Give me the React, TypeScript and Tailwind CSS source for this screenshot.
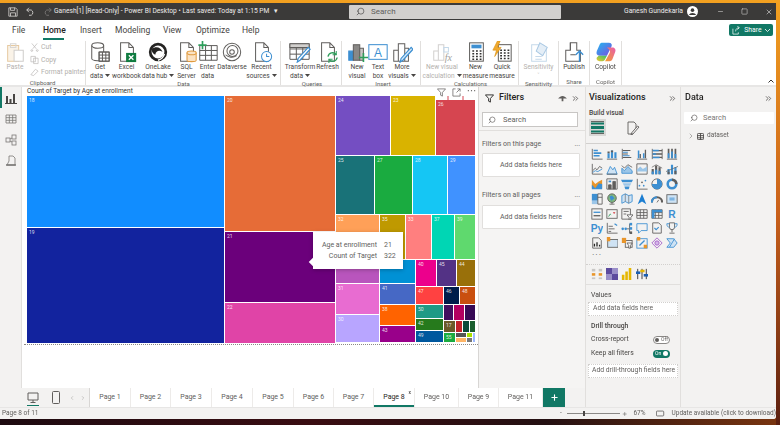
import type { ReactNode } from 'react';
import { ChevronRight, ChevronsRight, Minus, Plus, Search, Square, X } from 'lucide-react';

const GRAY = '#605e5c';
const BLUE = '#3d8fd1';
const GREEN = '#117865';

const CELLS: [string, number, number, number, number, string][] = [
    ['18', 27, 96, 224, 227, '#118dff'],
    ['19', 27, 228, 224, 343, '#12239e'],
    ['20', 225, 96, 335, 231, '#e66c37'],
    ['21', 225, 232, 335, 302, '#6b007b'],
    ['22', 225, 303, 335, 343, '#e044a7'],
    ['24', 336, 96, 390, 155, '#744ec2'],
    ['23', 391, 96, 435, 155, '#d9b300'],
    ['26', 436, 100, 475, 155, '#d64550'],
    ['25', 336, 156, 374, 214, '#197278'],
    ['27', 375, 156, 412, 214, '#1aab40'],
    ['28', 413, 156, 447, 214, '#15c6f4'],
    ['29', 448, 156, 475, 214, '#4092ff'],
    ['32', 336, 215, 379, 259, '#ffa058'],
    ['35', 380, 215, 405, 259, '#bf9900'],
    ['33', 406, 215, 431, 259, '#ff7f7f'],
    ['37', 432, 215, 454, 259, '#00d6b4'],
    ['39', 455, 215, 475, 259, '#5fd96e'],
    ['34', 336, 260, 379, 283, '#b955bd'],
    ['31', 336, 284, 379, 314, '#e86cd1'],
    ['30', 336, 315, 379, 342, '#b8a5ff'],
    ['36', 380, 260, 415, 283, '#0091d5'],
    ['41', 380, 284, 415, 304, '#4668c5'],
    ['38', 380, 305, 415, 325, '#ff6300'],
    ['43', 380, 326, 415, 342, '#99008a'],
    ['40', 416, 260, 436, 286, '#ec008c'],
    ['45', 437, 260, 456, 286, '#533285'],
    ['44', 457, 260, 475, 286, '#99700a'],
    ['47', 416, 287, 443, 304, '#ff4141'],
    ['46', 444, 287, 459, 304, '#001d4b'],
    ['48', 460, 287, 475, 304, '#c94f0f'],
    ['50', 416, 305, 443, 318, '#1f9a85'],
    ['42', 416, 319, 443, 330, '#267a1c'],
    ['49', 416, 331, 443, 342, '#00589e'],
    ['', 444, 305, 453, 320, '#42105f'],
    ['', 454, 305, 464, 320, '#b30060'],
    ['', 465, 305, 475, 320, '#380a55'],
    ['17', 444, 321, 455, 332, '#6b5a29'],
    ['', 456, 321, 462, 332, '#c4232b'],
    ['', 463, 321, 469, 332, '#0c4a3a'],
    ['', 470, 321, 475, 332, '#1a5e2e'],
    ['55', 444, 333, 455, 342, '#1aab40'],
    ['', 456, 333, 466, 337, '#555555'],
    ['', 467, 333, 472, 337, '#a8e000'],
    ['', 456, 338, 466, 342, '#ffb566'],
    ['', 467, 338, 472, 342, '#777777'],
    ['', 473, 333, 475, 342, '#9bb8ff'],
];

function Svg({ children, size = 22 }: { children: ReactNode; size?: number }) {
    return (
        <svg width={size} height={size} viewBox="0 0 24 24" fill="none" stroke={GRAY} strokeWidth="1.1">
            {children}
        </svg>
    );
}

function Grid({ x, y, w, h, c = 3, r = 3, stroke = GRAY }: { x: number; y: number; w: number; h: number; c?: number; r?: number; stroke?: string }) {
    const lines = [];
    for (let i = 0; i <= c; i++) lines.push(<path key={`c${i}`} d={`M${x + (w * i) / c} ${y}v${h}`} stroke={stroke} />);
    for (let i = 0; i <= r; i++) lines.push(<path key={`r${i}`} d={`M${x} ${y + (h * i) / r}h${w}`} stroke={stroke} />);
    return <>{lines}</>;
}

const DOC = 'M5 2h9l5 5v15H5z M14 2v5h5';

const ICONS: Record<string, ReactNode> = {
    paste: (
        <Svg>
            <path d="M4 5h12v17H4z" stroke="#e6c9a0" fill="#faf3e8" />
            <path d="M7 3h6v4H7z" stroke="#d8d6d4" />
            <path d="M11 10h10v12H11z" stroke="#cfcdcb" fill="#fff" />
        </Svg>
    ),
    getdata: (
        <Svg>
            <path d="M3 5v14c0 3 12 3 13 2V5" />
            <ellipse cx="9.5" cy="5" rx="6.5" ry="3" />
            <path d="M11 12h11v10H11z" fill="#fff" />
            <Grid x={11} y={12} w={11} h={10} />
        </Svg>
    ),
    excel: (
        <Svg>
            <path d={DOC} fill="#fff" />
            <rect x="11" y="13" width="11" height="10" fill="#107c41" stroke="none" />
            <path d="M14 15.500l5 5M19 15.500l-5 5" stroke="#fff" strokeWidth="1.400" />
        </Svg>
    ),
    onelake: (
        <Svg>
            <circle cx="12" cy="12" r="8.500" stroke="#252423" strokeWidth="3" />
            <path d="M5 9c5-4 10-2 12 3-3-2-7-2-8 3-2-1-4-3-4-6z" fill="#252423" stroke="none" />
            <path d="M12 21c3-1 6-3 7-7" stroke="#fff" strokeWidth="1.500" />
        </Svg>
    ),
    sql: (
        <Svg>
            <path d={DOC} />
            <path d="M12 13v8c0 2 10 2 10 0v-8z" fill="#fbe3c4" stroke="#e09a3e" />
            <ellipse cx="17" cy="13" rx="5" ry="2" fill="#fbe3c4" stroke="#e09a3e" />
        </Svg>
    ),
    enter: (
        <Svg>
            <Grid x={3} y={5} w={19} h={16} c={3} r={3} />
            <path d="M6 0v9M1.500 4.500h9" stroke="#2e9e5b" strokeWidth="1.800" />
        </Svg>
    ),
    dataverse: (
        <Svg>
            <circle cx="12" cy="12" r="9.500" />
            <circle cx="12.500" cy="11" r="6" />
            <circle cx="12" cy="12" r="2.500" />
            <path d="M5 15c3 3 8 4 12 1" />
        </Svg>
    ),
    recent: (
        <Svg>
            <path d={DOC} />
            <circle cx="17" cy="17" r="5.500" fill="#fff" stroke={BLUE} />
            <path d="M17 14v3h3" stroke={BLUE} />
        </Svg>
    ),
    transform: (
        <Svg>
            <Grid x={1} y={3} w={21} h={17} c={3} r={3} />
            <path d="M1 3h21v4H1z" fill="#d2d0ce" />
            <path d="M23 9L12 21l-3 2 1-4 11-12z" fill="#fff" stroke={BLUE} strokeWidth="1.300" />
        </Svg>
    ),
    refresh: (
        <Svg>
            <path d={DOC} />
            <path d="M12 17a5 5 0 0 1 9-2M22 18a5 5 0 0 1-9 2" stroke="#2e9e5b" strokeWidth="1.500" />
            <path d="M21 11v4h-4M13 24v-4h4" stroke="#2e9e5b" />
        </Svg>
    ),
    newvisual: (
        <Svg>
            <path d="M3 11h5v10H3z" fill={BLUE} stroke={BLUE} />
            <path d="M8 4h7v17H8z" fill="#8a8886" stroke={GRAY} />
            <path d="M15 8h4v13h-4z" fill="#c8c6c4" stroke={GRAY} />
            <path d="M19 13v10M14 18h10" stroke="#2e9e5b" strokeWidth="1.800" />
        </Svg>
    ),
    textbox: (
        <Svg>
            <rect x="2" y="4" width="20" height="16" stroke={BLUE} />
            <text x="12" y="17" textAnchor="middle" fontSize="13" fontFamily="Liberation Sans" fill={BLUE} stroke="none">A</text>
        </Svg>
    ),
    more: (
        <Svg>
            <path d="M3 10h5v12H3zM8 3h7v19H8zM15 8h4v14h-4z" />
            <path d="M24 9L13 21l-3 2 1-4 11-12z" fill="#d6e8f7" stroke={BLUE} strokeWidth="1.300" />
        </Svg>
    ),
    newcalc: (
        <Svg>
            <path d="M3 11h5v10H3zM8 4h6v17H8z" stroke="#d2d0ce" />
            <path d="M14 7h5v5h-5z" stroke="#c5d9ea" />
            <text x="19" y="22" textAnchor="middle" fontSize="11" fontStyle="italic" fontFamily="Liberation Serif" fill="#a19f9d" stroke="none">fx</text>
        </Svg>
    ),
    measure: (
        <Svg>
            <rect x="5" y="2" width="15" height="20" />
            <rect x="7" y="4" width="11" height="4" fill={BLUE} stroke="none" />
            <path d="M8 11h2M12 11h2M16 11h2M8 14h2M12 14h2M16 14h2M8 17h2M12 17h2M16 17h2M8 20h2M12 20h2M16 20h2" stroke="#323130" strokeWidth="1.600" />
        </Svg>
    ),
    quick: (
        <Svg>
            <rect x="8" y="4" width="14" height="18" />
            <path d="M10 10h2M14 10h2M18 10h2M10 13h2M14 13h2M18 13h2M10 16h2M14 16h2M18 16h2M10 19h2M14 19h2M18 19h2" stroke="#323130" strokeWidth="1.600" />
            <path d="M7 0L2 10h4l-2 7 7-10H7l3-7z" fill="#f0a92e" stroke="#d98a00" strokeWidth=".6" />
        </Svg>
    ),
    sensitivity: (
        <Svg>
            <path d="M4 4h12l4 4v14H4z" stroke="#c5d9ea" />
            <path d="M13 2l8 5-5 9-7-5z" fill="#e4eef7" stroke="#a9c8e3" />
            <path d="M8 17h7M8 20h7" stroke="#c5d9ea" />
        </Svg>
    ),
    publish: (
        <Svg>
            <path d="M8 2h7v8h4v12H3V10h5z" />
            <path d="M8 2v8M8 15h6" />
            <path d="M18 23V11M14 15l4-4 4 4" stroke={BLUE} strokeWidth="1.500" />
        </Svg>
    ),
    copilot: (
        <svg width="22" height="22" viewBox="0 0 24 24">
            <defs>
                <linearGradient id="cpA" x1="0" y1="0" x2="1" y2="1">
                    <stop offset="0" stopColor="#22b8f0" />
                    <stop offset="1" stopColor="#7a4de0" />
                </linearGradient>
                <linearGradient id="cpB" x1="1" y1="0" x2="0" y2="1">
                    <stop offset="0" stopColor="#e85bb0" />
                    <stop offset="1" stopColor="#f4a02c" />
                </linearGradient>
                <linearGradient id="cpC" x1="0" y1="1" x2="1" y2="0">
                    <stop offset="0" stopColor="#f2c72e" />
                    <stop offset="1" stopColor="#33c46a" />
                </linearGradient>
            </defs>
            <path d="M8 2h7c3 0 4 2 3 4l-5 10H5C2 16 1 14 2 11l3-7c.5-1.400 1.600-2 3-2z" fill="url(#cpA)" />
            <path d="M13 7h6c3 0 4 3 3 5l-3 8c-.6 1.500-1.700 2-3 2h-5l5-9c1-2 0-4-3-6z" fill="url(#cpB)" />
            <path d="M4 16h9l-2 4c-.6 1.400-1.500 2-3 2H5c-2 0-4-2-3-4z" fill="url(#cpC)" />
        </svg>
    ),
};

function Caret() {
    return (
        <svg className="inline-block ml-[2px] align-middle" width="5" height="3" viewBox="0 0 5 3">
            <path d="M0 0h5L2.500 3z" fill="#484644" />
        </svg>
    );
}

function RibbonButton({ className, icon, lines, caret, faded }: { className: string; icon: string; lines: string[]; caret?: boolean; faded?: boolean }) {
    return (
        <div className={`flex flex-col items-center shrink-0 ${className}`}>
            <div className="h-[22px] flex items-center justify-center">{ICONS[icon]}</div>
            <div className={`mt-[0px] text-center leading-[8.500px] text-[6.600px] whitespace-nowrap ${faded ? 'text-[#b3b0ad]' : 'text-[#484644]'}`}>
                {lines.map((l, i) => (
                    <div key={l}>
                        {l}
                        {caret && i === lines.length - 1 && <Caret />}
                    </div>
                ))}
            </div>
        </div>
    );
}

function RibbonGroup({ className, label, children }: { className: string; label: string; children: ReactNode }) {
    return (
        <div className={`flex flex-col h-[44px] border-r border-[#e1dfdd] shrink-0 ${className}`}>
            <div className="flex flex-1">{children}</div>
            <div className="text-center text-[6px] leading-[7px] text-[#605e5c]">{label}</div>
        </div>
    );
}

function ClipRow({ label, icon }: { label: string; icon: ReactNode }) {
    return (
        <div className="flex items-center gap-[2px] h-[12.500px] text-[6.800px] text-[#b3b0ad] whitespace-nowrap">
            <svg width="9" height="10" viewBox="0 0 10 10" fill="none" stroke="#bdbbb9" strokeWidth=".8">{icon}</svg>
            {label}
        </div>
    );
}

// small visual gallery glyphs, 14x14
const b = BLUE;
const g = GRAY;
const VIS: ReactNode[] = [
    <><path d="M1.500 1v12h12" stroke={g} /><path d="M3 3h5M3 6h9M3 9h7" stroke={b} strokeWidth="1.800" /></>,
    <><path d="M1 13h12" stroke={g} /><path d="M3 12V6M7 12V3M11 12V5" stroke={b} strokeWidth="2.500" /><path d="M3 6V4M7 5V3" stroke={g} strokeWidth="2.500" /></>,
    <><path d="M1.500 1v12" stroke={g} /><path d="M2 3h9M2 7h6M2 11h10" stroke={g} strokeWidth="1.200" /><path d="M2 5h6M2 9h8" stroke={b} strokeWidth="1.200" /></>,
    <><path d="M1 13h12" stroke={g} /><path d="M3 12V3M9 12V6" stroke={b} strokeWidth="1.800" /><path d="M5 12V7M11 12V2" stroke={g} strokeWidth="1.500" /></>,
    <><path d="M1.500 1v12M13 1v12" stroke={g} /><path d="M2 3h11M2 7h11M2 11h11" stroke={g} strokeWidth="1.600" /><path d="M2 3h7M2 7h4M2 11h8" stroke={b} strokeWidth="1.800" /></>,
    <><path d="M1 13h12" stroke={g} /><path d="M3 12V1M7 12V1M11 12V1" stroke={g} strokeWidth="2" /><path d="M3 12V6M7 12V4M11 12V7" stroke={b} strokeWidth="2" /></>,
    <><path d="M1.500 1v12h12" stroke={g} /><path d="M2 9l3-3 2 2 3-4 3 2" stroke={g} /><path d="M2 11l3-2 3 1 5-3" stroke={b} /></>,
    <><path d="M1 13l4-9 3 4 2-3 3 8z" fill="#cfe3f4" stroke={b} /><path d="M1 13h12" stroke={g} /></>,
    <><path d="M1 12V6l3 3 4-5 5 5v3z" fill="#9cc6e8" stroke={b} /><path d="M1 3l3 3 4-4 5 3" stroke={g} /></>,
    <><path d="M1 1h12v12H1z" stroke={g} /><path d="M1 8l4-4 3 3 5-3v6H1z" fill="#9cc6e8" stroke="none" /></>,
    <><path d="M2 13V7M6 13V3M10 13V5" stroke={g} strokeWidth="2.500" /><path d="M2 13v-3M6 13V8M10 13V9" stroke={b} strokeWidth="2.500" /><path d="M1 5l5-3 7 4" stroke={g} strokeWidth=".8" /></>,
    <><path d="M3 13V7M7 13V2M11 13V5" stroke={b} strokeWidth="2.500" /><path d="M3 13v-3M11 13V9" stroke={g} strokeWidth="2.500" /><path d="M0 10l14-6" stroke={g} strokeWidth=".8" /></>,
    <><path d="M1 2l4 5 4-3 4-2v10H1z" fill="#e8952a" /><path d="M1 8l4 4 4-6 4 1v6H1z" fill={b} /></>,
    <><path d="M1 13V1h12v12z" stroke={g} /><path d="M3 13V8h3v5M8 13V4h3v9" fill={g} stroke={g} /><path d="M3 4h3" stroke={b} strokeWidth="2" /></>,
    <><path d="M0 2h14l-1.500 3h-11z" fill={b} /><path d="M2 6h10l-1.500 3h-7z" fill="#9cc6e8" /><path d="M4 10h6l-1 3H5z" fill={b} /></>,
    <><path d="M1.500 1v12h12" stroke={g} /><circle cx="4" cy="9" r="1" fill={b} /><circle cx="7" cy="5" r="1" fill={g} /><circle cx="9" cy="9" r="1" fill={b} /><circle cx="11" cy="3" r="1" fill={b} /></>,
    <><circle cx="7" cy="7" r="6" stroke={g} /><path d="M7 7V1a6 6 0 0 1 0 12A6 6 0 0 1 1 7z" fill={b} stroke="none" /></>,
    <><circle cx="7" cy="7" r="5" stroke={b} strokeWidth="3" /><path d="M7 2a5 5 0 0 1 5 5" stroke={g} strokeWidth="3" /></>,
    <><path d="M1 1h7v8H1z" fill={b} /><path d="M1 9h7v4H1z" fill="#9cc6e8" /><path d="M8 1h5v12H8zM8 5h5" stroke={g} /></>,
    <><circle cx="7" cy="6" r="5" stroke={g} fill="#7fb77e" /><path d="M4 13h6M7 11v2" stroke={g} /><path d="M4 4l3-1 3 3-4 3z" fill={b} /></>,
    <><path d="M1 3l4-2 4 2 4-1v8l-4 2-4-2-4 2z" fill="#cfe3f4" stroke={b} /><path d="M5 1v9M9 3v9" stroke={g} strokeWidth=".7" /></>,
    <path d="M7 1l5 12-5-3-5 3z" fill="#1d7ed1" />,
    <><path d="M1 11a6 6 0 0 1 12 0" stroke={g} strokeWidth="2.500" /><path d="M1 11a6 6 0 0 1 6-6" stroke={b} strokeWidth="2.500" /><path d="M7 11l2-3" stroke={g} /></>,
    <><rect x="1" y="2" width="12" height="10" fill="#cfe3f4" stroke={g} /><path d="M4 6h6M4 8h6" stroke={b} /></>,
    <><rect x="1" y="1" width="12" height="12" stroke={g} /><path d="M3 5h8" stroke={b} strokeWidth="1.500" /><path d="M3 9h8" stroke={g} strokeWidth="1.500" /></>,
    <><rect x="1" y="2" width="12" height="10" stroke={g} /><path d="M3 10l2-3 1 1" stroke="#2e9e5b" /><path d="M8 5h3l-1.500 2z" fill="#d13438" /></>,
    <><path d="M1 1h10v12H1z" stroke={g} /><path d="M3 4h6M3 7h3" stroke={g} /><path d="M7 8h7l-2.500 3v3h-2v-3z" fill="#fff" stroke={g} /></>,
    <Grid x={1} y={2} w={12} h={10} c={3} r={3} />,
    <><Grid x={1} y={2} w={12} h={10} c={3} r={3} /><path d="M1 2h12v3H1zM1 2h3v10H1z" fill={b} /></>,
    <text x="7" y="12" textAnchor="middle" fontSize="12" fontWeight="700" fontFamily="Liberation Sans" fill={b} stroke="none">R</text>,
    <text x="7" y="12" textAnchor="middle" fontSize="12" fontWeight="700" fontFamily="Liberation Sans" fill={b} stroke="none">Py</text>,
    <><path d="M1.500 1v12h12" stroke={g} /><path d="M3 5h5M3 8h7M3 11h3" stroke={g} /><path d="M10 2l3 2" stroke={b} strokeWidth="1.500" /></>,
    <><circle cx="2" cy="8" r="1.500" fill={b} /><circle cx="5.500" cy="8" r="1.500" fill={b} /><path d="M7 8h3M10 2v11" stroke={g} /><rect x="10" y="1" width="3" height="3" fill={b} /><rect x="10" y="6" width="3" height="3" fill={b} /><rect x="10" y="11" width="3" height="3" fill={g} /></>,
    <path d="M1 2h12v8H6l-3 3v-3H1z" stroke={b} />,
    <><path d="M2 1h7l3 3v9H2z" stroke={g} /><path d="M4 7l2 2 3-3" stroke={b} strokeWidth="1.300" /></>,
    <><path d="M4 1h6v5a3 3 0 0 1-6 0zM7 9v3M4 13h6" stroke={g} /><path d="M4 2H1c0 3 1 4 3 4M10 2h3c0 3-1 4-3 4" stroke={b} /></>,
    <><path d="M2 1h7l3 3v9H2z" stroke={g} /><path d="M4 11V8M7 11V6M10 11V9" stroke="#252423" strokeWidth="1.500" /></>,
    <><rect x="2" y="3" width="12" height="9" fill="#cfe3f4" stroke={g} /><path d="M1 0h4v5H1z" fill="#e8952a" /></>,
    <><rect x="5" y="4" width="8" height="8" stroke={g} /><path d="M1 1h5v6H1z" fill="#e8952a" /><path d="M7 7h6l-2 3v3H9v-3z" fill="#fff" stroke={g} /></>,
    <><rect x="1" y="2" width="12" height="11" stroke={b} /><path d="M4 10l6-6" stroke={b} strokeWidth="1.500" /><path d="M1 0h4v4H1zM9 9h4v4H9z" fill="#e8952a" /></>,
    <><path d="M7 1l6 6-6 6-6-6z" stroke="#a45cc9" /><circle cx="7" cy="7" r="2.500" fill="#d5b6e8" stroke="#a45cc9" /></>,
    <><path d="M1 2h8l4 5-4 5H1l4-5z" fill="#cfe3f4" stroke={b} /><path d="M4 12l6-10" stroke={b} /></>,
];

function Toggle({ on }: { on: boolean }) {
    return on ? (
        <div className="flex items-center justify-between w-[17px] h-[8px] rounded-full bg-[#117865] px-[2px] text-[5px] leading-none text-white">
            On<span className="w-[5px] h-[5px] rounded-full bg-white" />
        </div>
    ) : (
        <div className="flex items-center justify-between w-[17px] h-[8px] rounded-full border border-[#8a8886] bg-white px-[1px] text-[5px] leading-none text-[#605e5c]">
            <span className="w-[4px] h-[4px] rounded-full bg-[#605e5c]" />Off
        </div>
    );
}

const TABS = [
    { label: 'Page 1', w: 'w-[41px]' },
    { label: 'Page 2', w: 'w-[40px]' },
    { label: 'Page 3', w: 'w-[41px]' },
    { label: 'Page 4', w: 'w-[41px]' },
    { label: 'Page 5', w: 'w-[41px]' },
    { label: 'Page 6', w: 'w-[40px]' },
    { label: 'Page 7', w: 'w-[40px]' },
    { label: 'Page 8', w: 'w-[41px]', active: true },
    { label: 'Page 10', w: 'w-[44px]' },
    { label: 'Page 9', w: 'w-[40px]' },
    { label: 'Page 11', w: 'w-[44px]' },
];

export default function App() {
    return (
        <div className="w-[780px] h-[425px] overflow-hidden bg-[linear-gradient(90deg,#1d0a10,#3a0d12_40%,#241012_70%,#7a3510)]" style={{ fontFamily: 'Roboto, "Noto Sans", sans-serif' }}>
            <div className="h-[3px] bg-[#f2a020]" />
            <div className="flex h-[422px]">
                <div className="w-[776px] h-[416px] flex flex-col rounded-br-[3px] overflow-hidden bg-[#f3f2f1] blur-[0.3px]">
                    {/* title bar */}
                    <div className="h-[17px] bg-[#3b3a39] flex items-center text-white shrink-0">
                        <div className="w-[54px] flex items-center pl-[8px] gap-[8px] shrink-0">
                            <svg width="10" height="10" viewBox="0 0 12 12" fill="none" stroke="#d2d0ce"><path d="M1 1h8l2 2v8H1zM3 1v3h5V1M3 11V7h6v4" /></svg>
                            <svg width="9" height="9" viewBox="0 0 12 12" fill="none" stroke="#d2d0ce" strokeWidth="1.200"><path d="M4 1L1 4l3 3M1 4h6a4 4 0 0 1 0 7H4" /></svg>
                            <svg width="9" height="9" viewBox="0 0 12 12" fill="none" stroke="#797775" strokeWidth="1.200"><path d="M8 1l3 3-3 3M11 4H5a4 4 0 0 0 0 7h3" /></svg>
                        </div>
                        <div className="w-[295px] shrink-0 text-[6.700px] text-[#edebe9] whitespace-nowrap">
                            Ganesh[1] [Read-Only] - Power BI Desktop • Last saved: Today at 1:15 PM <span className="ml-[3px] text-[7px]">▾</span>
                        </div>
                        <div className="w-[212px] h-[14px] bg-[#d2d0ce] rounded-[1px] flex items-center pl-[7px] gap-[6px] shrink-0 text-[8px] text-[#605e5c]">
                            <Search size={9} strokeWidth={1.500} color="#323130" className="-scale-x-100" /> Search
                        </div>
                        <div className="w-[67px] shrink-0 text-right text-[6.800px] text-[#edebe9] whitespace-nowrap ml-[55px]">Ganesh Gundekarla</div>
                        <div className="ml-[4px] w-[11px] h-[11px] rounded-full bg-white flex items-center justify-center shrink-0">
                            <svg width="9" height="9" viewBox="0 0 10 10" fill="#3b3a39"><circle cx="5" cy="3.500" r="2" /><path d="M1 9c1-3 7-3 8 0z" /></svg>
                        </div>
                        <div className="flex items-center ml-[19px] gap-[17px] text-[#d2d0ce]">
                            <Minus size={7} />
                            <Square size={7} />
                            <X size={8} />
                        </div>
                    </div>
                    {/* tabs */}
                    <div className="h-[20px] bg-white flex items-center shrink-0 pl-[12px] pr-[3px] text-[8.500px] text-[#484644]">
                        <span className="w-[31px]">File</span>
                        <span className="w-[37px] relative font-medium text-[#252423]">
                            Home
                            <span className="absolute left-0 right-[16px] -bottom-[4px] h-[2px] bg-[#117865]" />
                        </span>
                        <span className="w-[35px]">Insert</span>
                        <span className="w-[48px]">Modeling</span>
                        <span className="w-[33px]">View</span>
                        <span className="w-[46px]">Optimize</span>
                        <span>Help</span>
                        <div className="ml-auto h-[12px] w-[44px] rounded-[2px] bg-[#117865] flex items-center justify-center gap-[3px] text-[6.800px] text-white">
                            <svg width="9" height="9" viewBox="0 0 10 10" fill="none" stroke="#fff" strokeWidth=".8"><path d="M1 3v6h6V7M4 6c0-3 2-4 4-4M6 0l2 2-2 2" /></svg>
                            Share
                            <svg width="5" height="3" viewBox="0 0 5 3" fill="none" stroke="#fff" strokeWidth=".8"><path d="M0 0l2.500 2.500L5 0" /></svg>
                        </div>
                    </div>
                    {/* ribbon */}
                    <div className="h-[47px] bg-white flex items-start pt-[1px] border-b-2 border-[#e7e6e5] shrink-0 relative">
                        <RibbonGroup className="w-[86px]" label="Clipboard">
                            <RibbonButton className="w-[30px]" icon="paste" lines={['Paste']} faded />
                            <div className="pt-[0px] flex flex-col">
                                <ClipRow label="Cut" icon={<path d="M2 1l5 6M8 1L3 7M2 8a1 1 0 1 0 .1 0M8 8a1 1 0 1 0 .1 0" />} />
                                <ClipRow label="Copy" icon={<path d="M1 1h5v6H1zM4 3h5v6H4z" />} />
                                <ClipRow label="Format painter" icon={<path d="M1 8l5-6 3 2-5 5z" />} />
                            </div>
                        </RibbonGroup>
                        <RibbonGroup className="w-[195px] pl-[1px]" label="Data">
                            <RibbonButton className="w-[26px]" icon="getdata" lines={['Get', 'data']} caret />
                            <RibbonButton className="w-[27px]" icon="excel" lines={['Excel', 'workbook']} />
                            <RibbonButton className="w-[36px]" icon="onelake" lines={['OneLake', 'data hub']} caret />
                            <RibbonButton className="w-[21px]" icon="sql" lines={['SQL', 'Server']} />
                            <RibbonButton className="w-[21px]" icon="enter" lines={['Enter', 'data']} />
                            <RibbonButton className="w-[28px]" icon="dataverse" lines={['Dataverse']} />
                            <RibbonButton className="w-[31px]" icon="recent" lines={['Recent', 'sources']} caret />
                        </RibbonGroup>
                        <RibbonGroup className="w-[61px] pl-[2px]" label="Queries">
                            <RibbonButton className="w-[34px]" icon="transform" lines={['Transform', 'data']} caret />
                            <RibbonButton className="w-[21px]" icon="refresh" lines={['Refresh']} />
                        </RibbonGroup>
                        <RibbonGroup className="w-[79px] pl-[4px]" label="Insert">
                            <RibbonButton className="w-[22px]" icon="newvisual" lines={['New', 'visual']} />
                            <RibbonButton className="w-[20px]" icon="textbox" lines={['Text', 'box']} />
                            <RibbonButton className="w-[28px]" icon="more" lines={['More', 'visuals']} caret />
                        </RibbonGroup>
                        <RibbonGroup className="w-[98px] pl-[2px]" label="Calculations">
                            <RibbonButton className="w-[38px]" icon="newcalc" lines={['New visual', 'calculation']} caret faded />
                            <RibbonButton className="w-[29px]" icon="measure" lines={['New', 'measure']} />
                            <RibbonButton className="w-[24px]" icon="quick" lines={['Quick', 'measure']} />
                        </RibbonGroup>
                        <RibbonGroup className="w-[40px]" label="Sensitivity">
                            <RibbonButton className="w-[39px]" icon="sensitivity" lines={['Sensitivity', '˅']} faded />
                        </RibbonGroup>
                        <RibbonGroup className="w-[31px]" label="Share">
                            <RibbonButton className="w-[30px]" icon="publish" lines={['Publish']} />
                        </RibbonGroup>
                        <RibbonGroup className="w-[32px]" label="Copilot">
                            <RibbonButton className="w-[31px]" icon="copilot" lines={['Copilot']} />
                        </RibbonGroup>
                        <svg className="ml-auto mr-[2px] mt-[38px]" width="6" height="4" viewBox="0 0 6 4" fill="none" stroke="#323130"><path d="M.5 3.500L3 1l2.500 2.500" /></svg>
                    </div>
                    {/* main */}
                    <div className="flex flex-1 min-h-0">
                        <div className="w-[585px] flex flex-col shrink-0">
                            <div className="flex flex-1 min-h-0">
                                {/* left nav */}
                                <div className="w-[22px] bg-[#f3f2f1] flex flex-col items-center relative shrink-0 pt-[5px] gap-[9px] border-r border-[#e1dfdd]">
                                    <span className="absolute left-0 top-0 w-[2px] h-[21px] bg-[#117865]" />
                                    <svg width="12" height="12" viewBox="0 0 12 12"><path d="M1 12V4h2v8zM4.500 12V7h2v5zM8 12V2h2v10z" fill="#484644" /><path d="M0 11.500h12" stroke="#484644" /></svg>
                                    <svg width="12" height="12" viewBox="0 0 12 12" fill="none" stroke="#797775" strokeWidth=".8"><Grid x={1} y={2} w={10} h={8} c={3} r={3} stroke="#797775" /></svg>
                                    <svg width="12" height="12" viewBox="0 0 12 12" fill="none" stroke="#797775" strokeWidth=".8"><rect x="1" y="4" width="4" height="4" /><rect x="7" y="1" width="4" height="4" /><rect x="7" y="7" width="4" height="4" /><path d="M5 5l2-1M5 7l2 1" /></svg>
                                    <svg width="12" height="12" viewBox="0 0 12 12" fill="none" stroke="#797775" strokeWidth=".8"><path d="M4 1h4l2 2v7H2l2-4z" /><path d="M1 10h10" strokeWidth="1.500" /></svg>
                                </div>
                                {/* canvas */}
                                <div className="w-[456px] bg-white relative shrink-0 overflow-hidden">
                                    <div className="pl-[5px] h-[9px] text-[6.500px] leading-[8px] text-[#323130] whitespace-nowrap">Count of Target by Age at enrollment</div>
                                    <svg className="ml-[5px] block" width="449" height="247" viewBox="27 96 449 247">
                                        {CELLS.map(([label, x1, y1, x2, y2, fill], i) => (
                                            <g key={i}>
                                                <rect x={x1} y={y1} width={x2 - x1} height={y2 - y1} fill={fill} />
                                                {label && <text x={x1 + 2} y={y1 + 6} fontSize="5" fill="#fff" fillOpacity=".85">{label}</text>}
                                            </g>
                                        ))}
                                        <path d="M448 96v4M463 96v4" stroke="#d64550" />
                                    </svg>
                                    <div className="ml-[2px] mt-[1px] w-[454px] border-b border-dotted border-[#8a8886]" />
                                    {/* visual header */}
                                    <div className="absolute right-[2px] top-[1px] flex items-center gap-[6px]">
                                        <svg width="9" height="9" viewBox="0 0 10 10" fill="none" stroke="#605e5c" strokeWidth=".8"><path d="M.5 1h9L6 5v4L4 8V5z" /></svg>
                                        <svg width="9" height="9" viewBox="0 0 10 10" fill="none" stroke="#605e5c" strokeWidth=".8"><path d="M4 1H1v8h8V6M6 1h3v3M9 1L5 5" /></svg>
                                        <svg width="9" height="9" viewBox="0 0 10 10" fill="#605e5c"><circle cx="1.500" cy="3" r=".7" /><circle cx="5" cy="3" r=".7" /><circle cx="8.500" cy="3" r=".7" /></svg>
                                    </div>
                                    {/* tooltip */}
                                    <div className="absolute left-[291px] top-[145px] w-[90px] h-[37px] bg-white shadow-[0_1px_4px_rgba(0,0,0,0.25)] flex flex-col justify-center text-[7px] leading-[10.500px] text-[#605e5c]">
                                        <span className="absolute -left-[3px] top-[27px] w-[6px] h-[6px] rotate-45 bg-white" />
                                        <div className="grid grid-cols-[64px_auto] gap-x-[7px] whitespace-nowrap">
                                            <span className="text-right">Age at enrollment</span>
                                            <span>21</span>
                                            <span className="text-right">Count of Target</span>
                                            <span>322</span>
                                        </div>
                                    </div>
                                </div>
                                {/* filters */}
                                <div className="w-[107px] bg-[#f5f4f3] border-l border-[#d8d6d4] shrink-0 pl-[3px] pr-[4px] pt-[5px]">
                                    <div className="flex items-center h-[12px] text-[9px] font-medium text-[#252423]">
                                        <svg className="ml-[3px] mr-[5px]" width="9" height="9" viewBox="0 0 10 10" fill="none" stroke="#252423"><path d="M.5 1h9L6 5v4L4 8V5z" /></svg>
                                        Filters
                                        <svg className="ml-auto" width="9" height="7" viewBox="0 0 10 8" fill="#605e5c"><path d="M0 4c3-4 7-4 10 0H6v3H4V4z" /></svg>
                                        <ChevronsRight className="ml-[4px] mr-[1px]" size={9} color="#484644" />
                                    </div>
                                    <div className="mt-[8px] h-[15px] w-[96px] bg-white border border-[#c8c6c4] flex items-center pl-[5px] gap-[7px] text-[7.500px] text-[#605e5c]">
                                        <Search size={8} color="#605e5c" className="-scale-x-100" /> Search
                                    </div>
                                    <div className="-ml-[3px] -mr-[4px] mt-[3px] border-t border-[#e1dfdd]" />
                                    <div className="mt-[9px] flex justify-between items-center h-[9px] text-[7px] text-[#605e5c] pr-[1px]">Filters on this page<span className="text-[7px]">...</span></div>
                                    <div className="mt-[4px] h-[24px] w-[98px] bg-white border border-[#e1dfdd] rounded-[1px] flex items-center justify-center text-[7px] text-[#605e5c]">Add data fields here</div>
                                    <div className="mt-[14px] flex justify-between items-center h-[9px] text-[7px] text-[#605e5c] pr-[1px]">Filters on all pages<span className="text-[7px]">...</span></div>
                                    <div className="mt-[5px] h-[24px] w-[98px] bg-white border border-[#e1dfdd] rounded-[1px] flex items-center justify-center text-[7px] text-[#605e5c]">Add data fields here</div>
                                </div>
                            </div>
                            {/* page tabs */}
                            <div className="h-[19px] flex bg-[#f3f2f1] shrink-0">
                                <div className="w-[90px] pl-[27px] flex items-center shrink-0 border-r border-[#d8d6d4]">
                                    <span className="relative flex">
                                        <svg width="12" height="11" viewBox="0 0 12 11" fill="none" stroke="#605e5c"><path d="M1 1h10v7H1zM6 8v2M3.500 10.500h5" /></svg>
                                        <span className="absolute -bottom-[3px] left-0 w-[12px] h-[1px] bg-[#117865]" />
                                    </span>
                                    <svg className="ml-[13px]" width="8" height="13" viewBox="0 0 8 13" fill="none" stroke="#605e5c"><rect x=".5" y=".5" width="7" height="12" rx="1" /></svg>
                                    <ChevronRight className="ml-[9px] -scale-x-100" size={6} color="#a19f9d" />
                                    <ChevronRight className="ml-[5px]" size={6} color="#a19f9d" />
                                </div>
                                {TABS.map((t) => (
                                    <div key={t.label} className={`${t.w} relative shrink-0 bg-white border-r border-[#edebe9] flex items-center justify-center text-[7px] ${t.active ? 'text-[#252423]' : 'text-[#605e5c]'}`}>
                                        {t.label}
                                        {t.active && <span className="absolute right-[3px] top-[2px] text-[5px] leading-none">x</span>}
                                        {t.active && <span className="absolute left-0 right-0 bottom-0 h-[2px] bg-[#117865]" />}
                                    </div>
                                ))}
                                <div className="w-[22px] bg-[#117865] flex items-center justify-center shrink-0">
                                    <Plus size={9} strokeWidth={3} color="#fff" />
                                </div>
                            </div>
                        </div>
                        {/* visualizations */}
                        <div className="w-[96px] border-l border-r border-[#e1dfdd] shrink-0 flex flex-col bg-[#f3f2f1]">
                            <div className="flex items-center h-[12px] mt-[5px] pl-[3px] text-[9px] font-medium text-[#252423] whitespace-nowrap">
                                Visualizations
                                <ChevronsRight className="ml-auto mr-[3px]" size={9} color="#484644" />
                            </div>
                            <div className="mt-[4px] pl-[3px] h-[10px] text-[6.800px] font-medium text-[#484644] leading-[10px]">Build visual</div>
                            <div className="mt-[1px] pl-[3px] flex items-center h-[17px]">
                                <div className="w-[17px] h-[17px] bg-[#d8d8d6] flex items-center justify-center">
                                    <svg width="13" height="13" viewBox="0 0 13 13"><path d="M0 2.500h13M0 10.500h13" stroke={GREEN} strokeWidth="2" /><path d="M0 6.500h13" stroke={GREEN} strokeWidth="3" /><path d="M0 .5h13M0 12.500h13" stroke="#484644" strokeWidth=".8" /></svg>
                                </div>
                                <svg className="ml-[20px]" width="14" height="14" viewBox="0 0 14 14" fill="none" stroke="#605e5c" strokeWidth=".9"><path d="M2 1h6l2 2v4M2 1v12h5" /><path d="M13 6L7 13l-2 1 .5-2 6-7z" /></svg>
                            </div>
                            <div className="mt-[7px] border-t border-[#d2d0ce]" />
                            <div className="pl-[3px] pt-[3px] grid grid-cols-[repeat(6,15px)] auto-rows-[14.800px] items-center justify-items-center">
                                {VIS.map((v, i) => (
                                    <svg key={i} width="12" height="12" viewBox="0 0 14 14" fill="none" strokeWidth="1">{v}</svg>
                                ))}
                            </div>
                            <div className="pl-[6px] h-[13px] leading-[8px] text-[9px] tracking-[1px] text-[#605e5c]">···</div>
                            <div className="border-t border-dotted border-[#d2d0ce]" />
                            <div className="pl-[3px] h-[19px] grid grid-cols-[repeat(4,15px)] items-center justify-items-center">
                                <svg width="12" height="12" viewBox="0 0 14 14"><rect x="1" y="1" width="4" height="3" fill="#c8c6c4" /><rect x="9" y="1" width="4" height="3" fill="#c8c6c4" /><rect x="1" y="6" width="4" height="3" fill="#e8952a" /><rect x="9" y="6" width="4" height="3" fill="#e8952a" /><rect x="1" y="11" width="4" height="2" fill="#c8c6c4" /><rect x="9" y="11" width="4" height="2" fill="#c8c6c4" /></svg>
                                <svg width="12" height="12" viewBox="0 0 14 14"><rect width="7" height="7" fill="#5c4a9e" /><rect x="7" width="7" height="7" fill="#9a8fc9" /><rect y="7" width="7" height="7" fill="#9a8fc9" /><rect x="7" y="7" width="7" height="7" fill="#5c4a9e" /></svg>
                                <svg width="12" height="12" viewBox="0 0 14 14"><path d="M1 8h3v6H1zM5 4h3v10H5zM9 0h3v14H9z" fill="#e5b700" /></svg>
                                <svg width="12" height="12" viewBox="0 0 14 14"><path d="M2 1v12M7 1v12M12 1v12" stroke="#252423" /><rect x="0" y="4" width="5" height="3" fill="#1a5fb4" /><rect x="5" y="2" width="5" height="3" fill="#e5b700" /><rect x="9" y="7" width="5" height="3" fill="#1a5fb4" /></svg>
                            </div>
                            <div className="border-t border-[#e1dfdd]" />
                            <div className="pl-[5px] mt-[5px] h-[10px] leading-[10px] text-[6.800px] text-[#484644]">Values</div>
                            <div className="ml-[2px] mt-[2px] w-[90px] h-[14px] bg-white border border-dotted border-[#d2d0ce] flex items-center pl-[4px] text-[6.800px] text-[#605e5c]">Add data fields here</div>
                            <div className="pl-[5px] mt-[5px] h-[10px] leading-[10px] text-[6.800px] font-medium text-[#484644]">Drill through</div>
                            <div className="flex items-center justify-between pl-[5px] pr-[10px] mt-[4px] h-[10px] text-[6.800px] text-[#484644]">Cross-report<Toggle on={false} /></div>
                            <div className="flex items-center justify-between pl-[5px] pr-[10px] mt-[4px] h-[10px] text-[6.800px] text-[#484644]">Keep all filters<Toggle on /></div>
                            <div className="ml-[2px] mt-[5px] w-[90px] h-[14px] bg-white border border-dotted border-[#d2d0ce] flex items-center pl-[3px] text-[6.800px] text-[#605e5c] whitespace-nowrap">Add drill-through fields here</div>
                        </div>
                        {/* data */}
                        <div className="flex-1 bg-[#f3f2f1] flex flex-col">
                            <div className="flex items-center h-[12px] mt-[5px] pl-[4px] text-[9px] font-medium text-[#252423]">
                                Data
                                <ChevronsRight className="ml-auto mr-[3px]" size={9} color="#484644" />
                            </div>
                            <div className="mt-[8px] ml-[3px] w-[90px] h-[12px] bg-white rounded-[1px] flex items-center pl-[6px] gap-[5px] text-[7.500px] text-[#797775]">
                                <Search size={8} color="#605e5c" className="-scale-x-100" /> Search
                            </div>
                            <div className="mt-[7px] ml-[6px] flex items-center h-[10px] text-[6.500px] text-[#605e5c]">
                                <ChevronRight size={8} color="#8a8886" />
                                <svg className="ml-[2px] mr-[3px]" width="7" height="7" viewBox="0 0 8 8" fill="none" stroke="#484644"><rect x=".5" y=".5" width="7" height="7" rx="1" /><path d="M.5 3h7M.5 5.500h7M4 .5v7" /></svg>
                                dataset
                            </div>
                        </div>
                    </div>
                    {/* status bar */}
                    <div className="h-[12px] bg-[#f3f2f1] border-t border-[#e7e6e5] flex items-center shrink-0 pl-[2px] text-[6.500px] text-[#605e5c] whitespace-nowrap">
                        <span className="w-[558px] shrink-0">Page 8 of 11</span>
                        <span className="w-[7px] shrink-0">-</span>
                        <span className="relative w-[53px] h-[1px] bg-[#8a8886] shrink-0">
                            <span className="absolute left-[16px] -top-[2px] w-[2px] h-[5px] bg-[#484644]" />
                        </span>
                        <Plus className="ml-[2px]" size={6} strokeWidth={2} color="#484644" />
                        <span className="ml-[6px] w-[12px]">67%</span>
                        <svg className="ml-[11px]" width="9" height="7" viewBox="0 0 10 7" fill="none" stroke="#605e5c"><rect x=".5" y=".5" width="9" height="6" rx="1" /></svg>
                        <span className="ml-[7px]">Update available (click to download)</span>
                    </div>
                </div>
                <div className="flex-1 bg-[linear-gradient(180deg,#f2a020,#c9601a_50%,#5a1f10)]" />
            </div>
        </div>
    );
}
